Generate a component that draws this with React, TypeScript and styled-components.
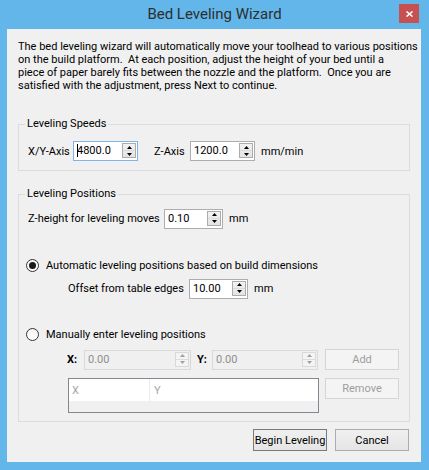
import React from "react";
import styled, { createGlobalStyle } from "styled-components";

const GlobalStyle = createGlobalStyle`
  html, body {
    margin: 0;
    padding: 0;
    background: #62b6ea;
  }
  * {
    box-sizing: border-box;
  }
`;

const FONT = `Roboto, "Liberation Sans", sans-serif`;

const Window = styled.div`
  width: 429px;
  height: 470px;
  background: #62b6ea;
  display: flex;
  flex-direction: column;
  overflow: hidden;
  font-family: ${FONT};
  font-size: 11px;
  color: #000;
`;

const TitleBar = styled.div`
  height: 29px;
  display: grid;
  grid-template-columns: 1fr auto 1fr;
  align-items: start;
`;

const Title = styled.div`
  grid-column: 2;
  font-size: 15px;
  line-height: 28px;
  color: #2e2e2e;
`;

const CloseButton = styled.div`
  grid-column: 3;
  justify-self: end;
  margin: 4px 10px 0 0;
  width: 20px;
  height: 19px;
  background: #c75050;
  display: flex;
  align-items: center;
  justify-content: center;
`;

const Client = styled.div`
  margin: 0 8px 0 7px;
  height: 433px;
  background: #f0f0f0;
  padding: 11px 11px 0;
  display: flex;
  flex-direction: column;
`;

const Intro = styled.div`
  line-height: 13px;
  white-space: pre;
`;

const Group = styled.div<{ $top: number; $padTop: number; $padBottom: number }>`
  position: relative;
  margin-top: ${({ $top }) => $top}px;
  padding: ${({ $padTop }) => $padTop}px 0 ${({ $padBottom }) => $padBottom}px;
  border: 1px solid #dcdcdc;
  display: flex;
  flex-direction: column;
`;

const Legend = styled.div`
  position: absolute;
  top: -8px;
  left: 6px;
  padding: 0 2px;
  line-height: 13px;
  background: #f0f0f0;
`;

const Row = styled.div<{ $indent: number; $top?: number; $height?: number }>`
  display: flex;
  align-items: center;
  padding-left: ${({ $indent }) => $indent}px;
  margin-top: ${({ $top = 0 }) => $top}px;
  height: ${({ $height = 21 }) => $height}px;
`;

const TopRow = styled(Row)`
  align-items: flex-start;
`;

const Label = styled.span<{ $w?: number; $gap?: number; $bold?: boolean }>`
  flex: none;
  width: ${({ $w }) => ($w ? `${$w}px` : "auto")};
  margin-left: ${({ $gap = 0 }) => $gap}px;
  font-weight: ${({ $bold }) => ($bold ? 700 : 400)};
  white-space: nowrap;
`;

const SpinFrame = styled.div<{ $w: number; $focused?: boolean; $disabled?: boolean }>`
  flex: none;
  width: ${({ $w }) => $w}px;
  height: 20px;
  display: flex;
  align-items: center;
  padding: 1px 1px 2px 3px;
  border: 1px solid
    ${({ $focused, $disabled }) =>
      $focused ? "#7eb4ea" : $disabled ? "#d9d9d9" : "#abadb3"};
  background: ${({ $disabled }) => ($disabled ? "#f0f0f0" : "#fff")};
  color: ${({ $disabled }) => ($disabled ? "#8e8e8e" : "#000")};
`;

const SpinValue = styled.span`
  flex: 1;
  display: flex;
  align-items: center;
  white-space: nowrap;
`;

const Caret = styled.span`
  width: 1px;
  height: 13px;
  background: #000;
  margin-right: -1px;
`;

const SpinButtons = styled.div<{ $disabled?: boolean }>`
  flex: none;
  width: 14px;
  height: 100%;
  display: flex;
  flex-direction: column;
  border: 1px solid ${({ $disabled }) => ($disabled ? "#d9d9d9" : "#acacac")};
  background: ${({ $disabled }) =>
    $disabled ? "#f4f4f4" : "linear-gradient(#f2f2f2, #e3e3e3)"};
`;

const SpinHalf = styled.div<{ $disabled?: boolean }>`
  flex: 1;
  display: flex;
  align-items: center;
  justify-content: center;
  & + & {
    border-top: 1px solid ${({ $disabled }) => ($disabled ? "#dcdcdc" : "#bcbcbc")};
  }
`;

const RadioCircle = styled.span`
  flex: none;
  width: 13px;
  height: 13px;
  border-radius: 50%;
  border: 1px solid #333;
  background: linear-gradient(#f4f4f4, #ffffff);
  display: flex;
  align-items: center;
  justify-content: center;
`;

const RadioDot = styled.span`
  width: 7px;
  height: 7px;
  border-radius: 50%;
  background: #1a1a1a;
`;

const Button = styled.div<{ $w: number; $h: number; $gap?: number; $disabled?: boolean; $default?: boolean }>`
  flex: none;
  width: ${({ $w }) => $w}px;
  height: ${({ $h }) => $h}px;
  margin-left: ${({ $gap = 0 }) => $gap}px;
  display: flex;
  align-items: center;
  justify-content: center;
  white-space: nowrap;
  border: 1px solid
    ${({ $disabled, $default }) => ($disabled ? "#d5d5d5" : $default ? "#7a7a7a" : "#acacac")};
  background: ${({ $disabled }) =>
    $disabled ? "#f4f4f4" : "linear-gradient(#f0f0f0, #e5e5e5)"};
  color: ${({ $disabled }) => ($disabled ? "#9d9d9d" : "#000")};
`;

const Table = styled.div`
  flex: none;
  width: 251px;
  height: 35px;
  border: 1px solid #828790;
  background: #f0f0f0;
`;

const TableHeader = styled.div`
  display: flex;
  height: 22px;
  background: #fff;
`;

const HeaderCell = styled.div<{ $w?: number }>`
  flex: ${({ $w }) => ($w ? "none" : "1")};
  width: ${({ $w }) => ($w ? `${$w}px` : "auto")};
  display: flex;
  align-items: center;
  padding-left: 3px;
  color: #a6a6a6;
  & + & {
    border-left: 1px solid #e3ecf6;
    padding-left: 4px;
  }
`;

const Footer = styled.div`
  margin-top: 7px;
  display: flex;
  justify-content: flex-end;
  padding-right: 1px;
`;

const Arrow = ({ up, color }: { up?: boolean; color: string }) => (
  <svg width="5" height="3" viewBox="0 0 5 3">
    <polygon points={up ? "0,3 5,3 2.5,0" : "0,0 5,0 2.5,3"} fill={color} />
  </svg>
);

interface SpinBoxProps {
  width: number;
  value: string;
  focused?: boolean;
  disabled?: boolean;
}

const SpinBox = ({ width, value, focused, disabled }: SpinBoxProps) => {
  const arrowColor = disabled ? "#a0a0a0" : "#000";
  return (
    <SpinFrame $w={width} $focused={focused} $disabled={disabled}>
      <SpinValue>
        {focused && <Caret />}
        {value}
      </SpinValue>
      <SpinButtons $disabled={disabled}>
        <SpinHalf $disabled={disabled}>
          <Arrow up color={arrowColor} />
        </SpinHalf>
        <SpinHalf $disabled={disabled}>
          <Arrow color={arrowColor} />
        </SpinHalf>
      </SpinButtons>
    </SpinFrame>
  );
};

const Radio = ({ checked, label }: { checked?: boolean; label: string }) => (
  <Row $indent={7} $height={16}>
    <RadioCircle>{checked && <RadioDot />}</RadioCircle>
    <Label $gap={7}>{label}</Label>
  </Row>
);

const introLines = [
  "The bed leveling wizard will automatically move your toolhead to various positions",
  "on the build platform.  At each position, adjust the height of your bed until a",
  "piece of paper barely fits between the nozzle and the platform.  Once you are",
  "satisfied with the adjustment, press Next to continue.",
];

export default function App() {
  return (
    <>
      <GlobalStyle />
      <Window>
        <TitleBar>
          <Title>Bed Leveling Wizard</Title>
          <CloseButton>
            <svg width="7" height="6" viewBox="0 0 7 6">
              <path d="M0.5 0.5 L6.5 5.5 M6.5 0.5 L0.5 5.5" stroke="#fff" strokeWidth="1.6" />
            </svg>
          </CloseButton>
        </TitleBar>
        <Client>
          <Intro>
            {introLines.map((line) => (
              <div key={line}>{line}</div>
            ))}
          </Intro>

          <Group $top={32} $padTop={16} $padBottom={9}>
            <Legend>Leveling Speeds</Legend>
            <Row $indent={9} $height={20}>
              <Label $w={45}>X/Y-Axis</Label>
              <SpinBox width={65} value="4800.0" focused />
              <Label $w={36} $gap={16}>Z-Axis</Label>
              <SpinBox width={65} value="1200.0" />
              <Label $gap={6}>mm/min</Label>
            </Row>
          </Group>

          <Group $top={23} $padTop={13} $padBottom={8}>
            <Legend>Leveling Positions</Legend>
            <Row $indent={9}>
              <Label $w={136}>Z-height for leveling moves</Label>
              <SpinBox width={59} value="0.10" />
              <Label $gap={6}>mm</Label>
            </Row>

            <Row $indent={0} $top={28} $height={16}>
              <Radio checked label="Automatic leveling positions based on build dimensions" />
            </Row>
            <Row $indent={49} $top={5}>
              <Label $w={121}>Offset from table edges</Label>
              <SpinBox width={59} value="10.00" />
              <Label $gap={6}>mm</Label>
            </Row>

            <Row $indent={0} $top={27} $height={16}>
              <Radio label="Manually enter leveling positions" />
            </Row>
            <Row $indent={48} $top={7}>
              <Label $w={17} $bold>X:</Label>
              <SpinBox width={107} value="0.00" disabled />
              <Label $w={15} $gap={6} $bold>Y:</Label>
              <SpinBox width={106} value="0.00" disabled />
              <Button $w={74} $h={21} $gap={7} $disabled>Add</Button>
            </Row>
            <TopRow $indent={49} $top={8} $height={35}>
              <Table>
                <TableHeader>
                  <HeaderCell $w={80}>X</HeaderCell>
                  <HeaderCell>Y</HeaderCell>
                </TableHeader>
              </Table>
              <Button $w={74} $h={21} $gap={6} $disabled>Remove</Button>
            </TopRow>
          </Group>

          <Footer>
            <Button $w={74} $h={22} $default>Begin Leveling</Button>
            <Button $w={74} $h={22} $gap={8}>Cancel</Button>
          </Footer>
        </Client>
      </Window>
    </>
  );
}
